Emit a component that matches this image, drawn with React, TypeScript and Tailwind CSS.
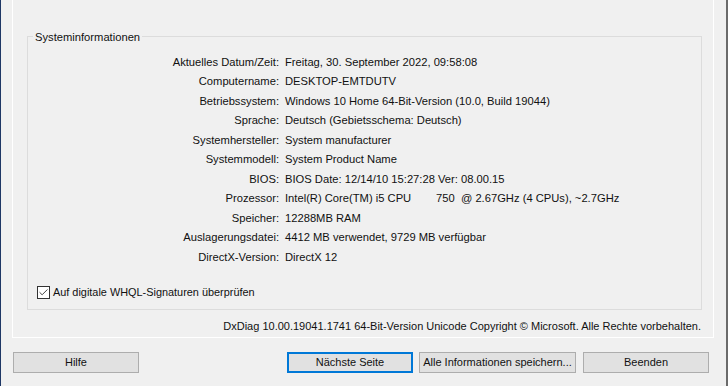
import { Check } from 'lucide-react';

const rows: [string, string][] = [
  ['Aktuelles Datum/Zeit:', 'Freitag, 30. September 2022, 09:58:08'],
  ['Computername:', 'DESKTOP-EMTDUTV'],
  ['Betriebssystem:', 'Windows 10 Home 64-Bit-Version (10.0, Build 19044)'],
  ['Sprache:', 'Deutsch (Gebietsschema: Deutsch)'],
  ['Systemhersteller:', 'System manufacturer'],
  ['Systemmodell:', 'System Product Name'],
  ['BIOS:', 'BIOS Date: 12/14/10 15:27:28 Ver: 08.00.15'],
  ['Prozessor:', 'Intel(R) Core(TM) i5 CPU        750  @ 2.67GHz (4 CPUs), ~2.7GHz'],
  ['Speicher:', '12288MB RAM'],
  ['Auslagerungsdatei:', '4412 MB verwendet, 9729 MB verfügbar'],
  ['DirectX-Version:', 'DirectX 12'],
];

function DialogButton({ label, width, focused }: { label: string; width: string; focused?: boolean }) {
  return (
    <button
      className={`${width} flex h-[21px] items-center justify-center whitespace-nowrap bg-[#e1e1e1] text-[11px] text-[#111] ${
        focused ? 'border-2 border-[#0078d7]' : 'border border-[#adadad]'
      }`}
      type="button">
      {label}
    </button>
  );
}

export default function App() {
  return (
    <div
      className="flex h-[386px] w-[728px] flex-col border-l border-r-2 border-l-[#1e3765] border-r-[#6b6b6b] bg-[#f0f0f0] text-[11.2px] text-[#111]"
      style={{ fontFamily: '"Liberation Sans", Arial, sans-serif' }}>
      {/* tab page */}
      <div className="ml-[11px] h-[338px] w-[702px] border-x border-b border-white pl-[14px] pr-[10px] pt-[36px]">
        <div className="relative h-[274px] w-[675px] border border-[#dcdcdc]">
          <span className="absolute -top-[7px] left-[5px] bg-[#f0f0f0] px-[2px] leading-[14px]">
            Systeminformationen
          </span>

          <div className="grid grid-cols-[251px_1fr] gap-x-[6px] pt-[16px] leading-[19.45px]">
            {rows.map(([label, value]) => (
              <div key={label} className="contents">
                <span className="text-right">{label}</span>
                <span className="whitespace-pre">{value}</span>
              </div>
            ))}
          </div>

          <label className="mt-[17px] ml-[9px] flex items-center gap-[3px] text-[10.9px]">
            <span className="flex h-[13px] w-[13px] items-center justify-center border border-[#333] bg-white">
              <Check className="h-[11px] w-[11px] text-[#333]" strokeWidth={2} />
            </span>
            <span>Auf digitale WHQL-Signaturen überprüfen</span>
          </label>
        </div>

        <p className="mt-[9px] pr-[2px] text-right text-[11px] leading-[14px]">
          DxDiag 10.00.19041.1741 64-Bit-Version Unicode Copyright © Microsoft. Alle Rechte vorbehalten.
        </p>
      </div>

      {/* buttons */}
      <div className="mt-[14px] flex items-center pl-[12px]">
        <DialogButton label="Hilfe" width="w-[126px]" />
        <div className="w-[148px]" />
        <DialogButton focused label="Nächste Seite" width="w-[126px]" />
        <div className="w-[6px]" />
        <DialogButton label="Alle Informationen speichern..." width="w-[157px]" />
        <div className="w-[7px]" />
        <DialogButton label="Beenden" width="w-[126px]" />
      </div>
    </div>
  );
}
